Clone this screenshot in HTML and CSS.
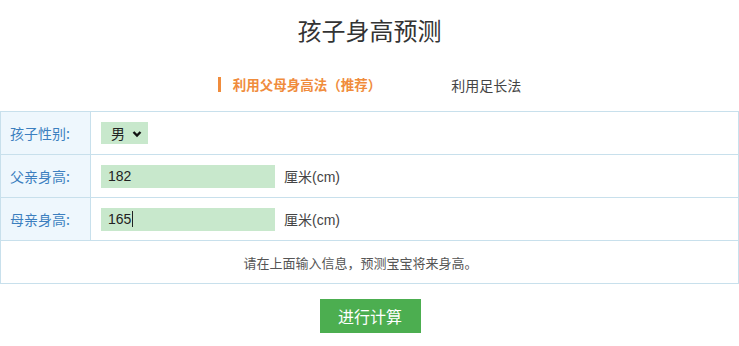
FILE: index.html
```html
<!DOCTYPE html>
<html lang="zh-CN">
<head>
<meta charset="utf-8">
<title>孩子身高预测</title>
<link rel="stylesheet" href="styles.css">
</head>
<body>
<div class="page">
  <h1 class="title">孩子身高预测</h1>
  <div class="tabs">
    <div class="tab tab-active">利用父母身高法（推荐）</div>
    <div class="tab">利用足长法</div>
  </div>
  <div class="form">
    <div class="row">
      <div class="label">孩子性别:</div>
      <div class="value">
        <div class="select-wrap">
          <select class="select"><option>男</option><option>女</option></select>
          <svg class="chev" width="10" height="8" viewBox="0 0 10 8"><path d="M1.5 2 L5 5.5 L8.5 2" fill="none" stroke="#111" stroke-width="2.4"/></svg>
        </div>
      </div>
    </div>
    <div class="row">
      <div class="label">父亲身高:</div>
      <div class="value">
        <input class="input" type="text" value="182">
        <span class="unit">厘米(cm)</span>
      </div>
    </div>
    <div class="row">
      <div class="label">母亲身高:</div>
      <div class="value">
        <div class="input input-fake">165<span class="caret"></span></div>
        <span class="unit">厘米(cm)</span>
      </div>
    </div>
    <div class="row hint">请在上面输入信息，预测宝宝将来身高。</div>
  </div>
  <div class="actions">
    <button class="btn" type="button">进行计算</button>
  </div>
</div>
</body>
</html>
```
FILE: styles.css
```css
* { box-sizing: border-box; }
html, body { margin: 0; padding: 0; background: #fff; }
body {
  font-family: "Liberation Sans", "Noto Sans CJK SC", sans-serif;
  color: #333;
}
.page { width: 739px; }
.title {
  margin: 0;
  padding-top: 14px;
  height: 70px;
  line-height: 32px;
  font-size: 24px;
  font-weight: normal;
  text-align: center;
  color: #333;
  font-family: "Noto Sans CJK SC", sans-serif;
}
.tabs {
  display: flex;
  justify-content: center;
  gap: 70px;
  height: 30px;
  line-height: 30px;
  margin-bottom: 11px;
  font-family: "Noto Sans CJK SC", sans-serif;
}
.tab { font-size: 14px; color: #444; }
.tab-active {
  font-size: 13.5px;
  font-weight: bold;
  color: #f08c3c;
  border-left: 3px solid #f08c3c;
  padding-left: 12px;
  line-height: 15px;
  height: 15px;
  margin-top: 7px;
}
.form {
  border-top: 1px solid #c8e0ec;
  border-right: 1px solid #c8e0ec;
  border-left: 1px solid #c8e0ec;
}
.row {
  display: flex;
  height: 43px;
  border-bottom: 1px solid #c8e0ec;
}
.label {
  width: 90px;
  flex: none;
  background: #eef7fd;
  border-right: 1px solid #c8e0ec;
  color: #3c7fbf;
  font-size: 14px;
  line-height: 42px;
  padding-left: 9px;
  font-family: "Noto Sans CJK SC", sans-serif;
}
.value {
  display: flex;
  align-items: center;
  padding-left: 10px;
}
.select-wrap { position: relative; display: inline-flex; }
.select {
  -webkit-appearance: none;
  appearance: none;
  border: 0;
  outline: 0;
  background: #c8e8cc;
  width: 47px;
  height: 22px;
  padding: 0 0 0 10px;
  font-size: 14px;
  color: #222;
  font-family: "Noto Sans CJK SC", sans-serif;
}
.chev {
  position: absolute;
  right: 6px;
  top: 8px;
  pointer-events: none;
}
.input {
  width: 174px;
  height: 23px;
  border: 0;
  outline: 0;
  background: #c8e8cc;
  padding: 0 0 0 7px;
  font-size: 14px;
  color: #222;
  font-family: "Liberation Sans", sans-serif;
  margin: 0;
}
.input-fake {
  display: flex;
  align-items: center;
  line-height: 23px;
}
.caret {
  display: inline-block;
  width: 1px;
  height: 16px;
  background: #222;
  margin-left: 1px;
}
.unit {
  margin-left: 9px;
  font-size: 14px;
  color: #444;
}
.hint {
  justify-content: center;
  align-items: center;
  padding-right: 18px;
  font-size: 13px;
  color: #555;
  font-family: "Noto Sans CJK SC", sans-serif;
}
.actions {
  display: flex;
  justify-content: center;
  padding-top: 15px;
}
.btn {
  width: 101px;
  height: 34px;
  border: 0;
  background: #4cae50;
  color: #fff;
  font-size: 16px;
  font-family: "Noto Sans CJK SC", sans-serif;
  padding: 0;
  margin-left: 1px;
}
```
